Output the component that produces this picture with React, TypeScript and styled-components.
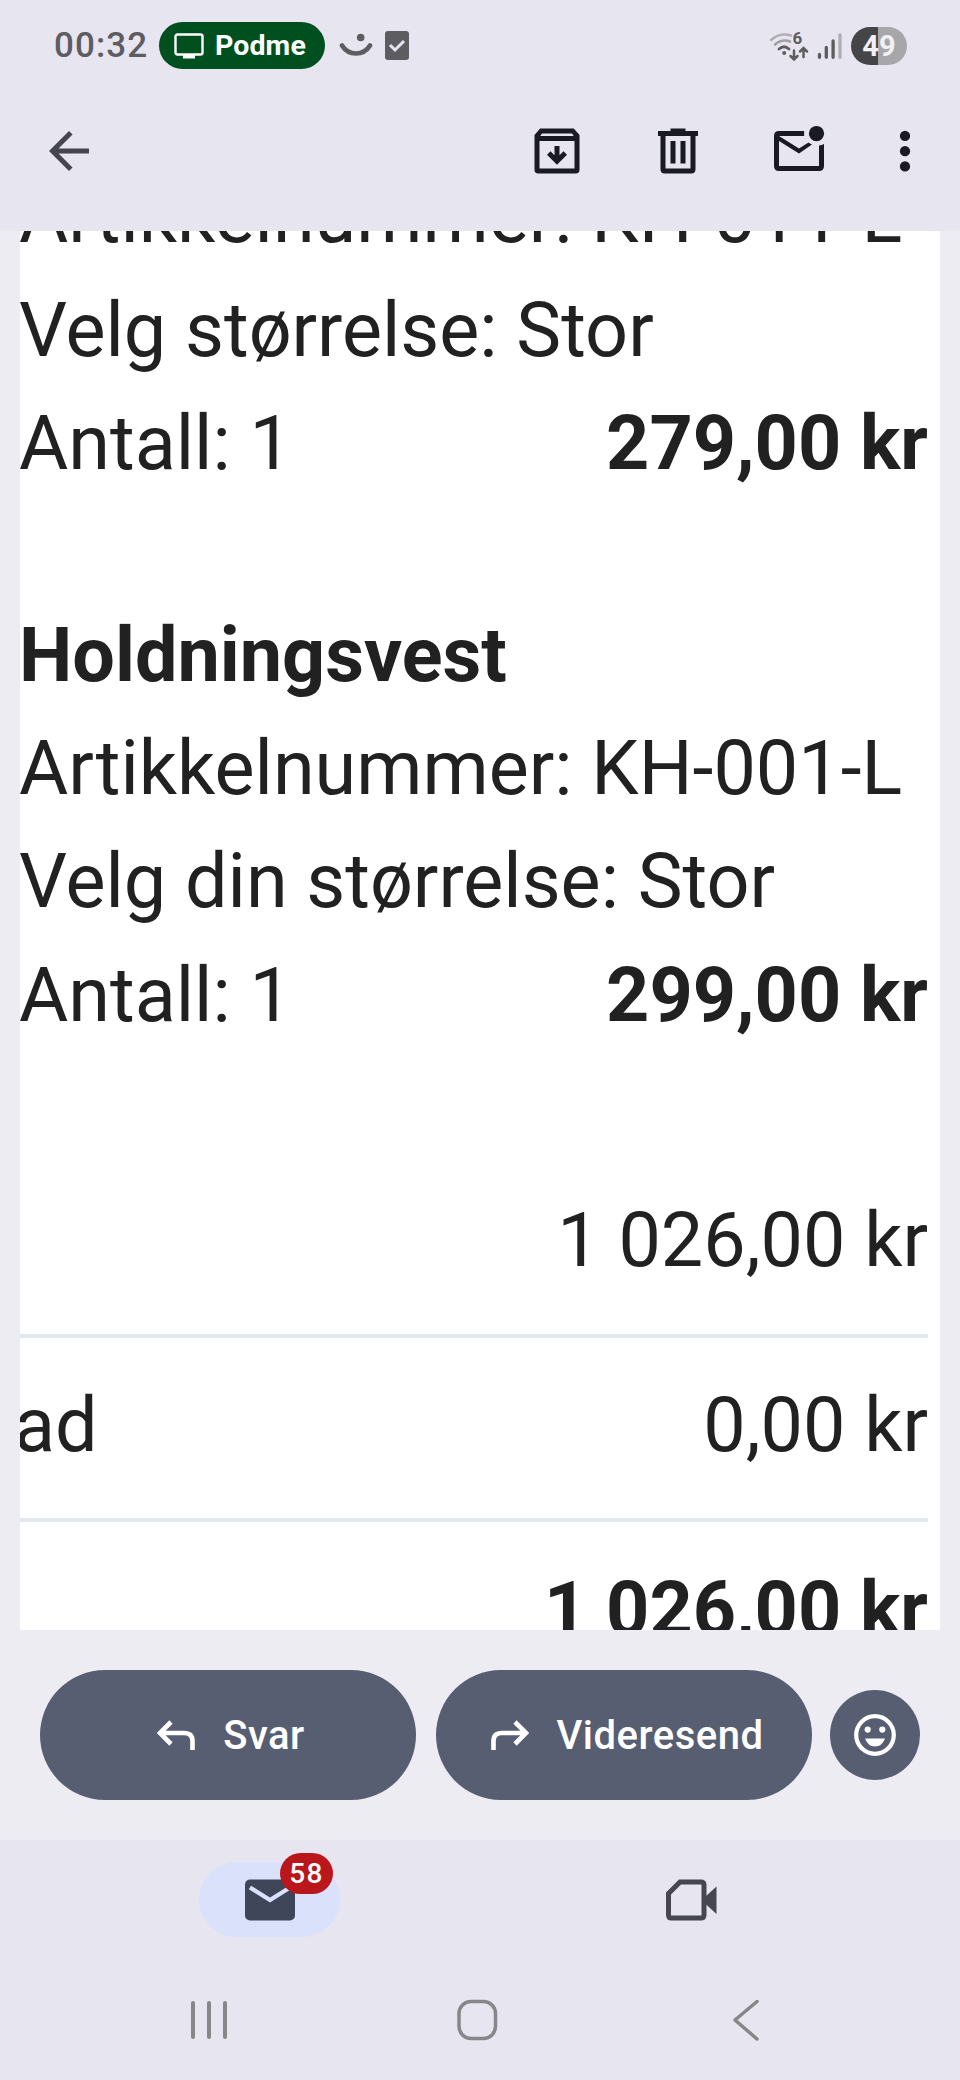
import React from "react";
import styled, { createGlobalStyle } from "styled-components";

const Global = createGlobalStyle`
  * { box-sizing: border-box; }
  html, body { margin: 0; padding: 0; }
  body { background: #edecf2; font-family: Roboto, "Liberation Sans", sans-serif; }
`;

const Screen = styled.div`
  display: flex;
  flex-direction: column;
  width: 960px;
  height: 2080px;
  overflow: hidden;
  background: #edecf2;
`;

const Header = styled.header`
  flex: none;
  height: 231px;
  background: #e7e5ef;
`;

const StatusBar = styled.div`
  display: flex;
  align-items: center;
  height: 91px;
  padding: 0 53px 0 54px;
`;

const Clock = styled.span`
  width: 105px;
  color: #5d5c61;
  font-size: 35px;
  font-weight: 500;
  letter-spacing: 1.1px;
  white-space: nowrap;
`;

const CastPill = styled.div`
  display: flex;
  align-items: center;
  gap: 11px;
  width: 166px;
  height: 47px;
  padding-left: 15px;
  border-radius: 24px;
  background: #00501f;
  color: #fff;
  font-size: 28.5px;
  font-weight: 700;
  letter-spacing: 0.1px;
`;

const Notices = styled.div`
  display: flex;
  align-items: center;
  gap: 12px;
  margin-left: 14px;
`;

const Indicators = styled.div`
  display: flex;
  align-items: center;
  gap: 8px;
  margin-left: auto;
`;

const Battery = styled.div`
  display: flex;
  align-items: center;
  justify-content: center;
  width: 56px;
  height: 38px;
  border-radius: 19px;
  background: linear-gradient(90deg, #454547 49%, #a7a6aa 49%);
  color: #f1f0f6;
  font-size: 29px;
  font-weight: 700;
`;

const Toolbar = styled.div`
  display: flex;
  align-items: center;
  height: 119px;
  padding: 0 25px 0 39px;
`;

const Actions = styled.div`
  display: flex;
  align-items: center;
  gap: 61px;
  margin-left: auto;
`;

const IconButton = styled.button<{ $pull?: number }>`
  display: flex;
  width: 60px;
  height: 60px;
  margin: 0 0 0 ${(p) => -(p.$pull ?? 0)}px;
  padding: 0;
  border: 0;
  background: none;
`;

const Message = styled.main`
  flex: none;
  display: flex;
  flex-direction: column;
  justify-content: flex-end;
  width: 920px;
  height: 1399px;
  margin-left: 20px;
  padding-right: 12px;
  overflow: hidden;
  background: #fff;
  color: #212121;
  font-size: 75.5px;
  line-height: 113.2px;
  white-space: nowrap;
`;

const Scrolled = styled.div`
  flex: none;
  margin-bottom: -37.2px;
`;

const Item = styled.section`
  margin: 0 0 99px -1px;
`;

const Line = styled.div`
  display: flex;
  justify-content: space-between;
  height: 113.2px;
`;

const Strong = styled.span`
  font-weight: 700;
`;

const TotalRow = styled.div<{ $first?: boolean; $last?: boolean; $bold?: boolean }>`
  display: flex;
  justify-content: flex-end;
  height: ${(p) => (p.$first ? 187 : p.$last ? 145 : 184.5)}px;
  padding-top: ${(p) => (p.$first ? 33.8 : 31.2)}px;
  border-bottom: ${(p) => (p.$last ? 0 : 4)}px solid #e2e8f0;
  font-weight: ${(p) => (p.$bold ? 700 : 400)};
`;

const RowLabel = styled.span`
  margin: 0 auto 0 -6px;
`;

const ReplyBar = styled.div`
  flex: none;
  display: flex;
  align-items: center;
  gap: 20px;
  height: 210px;
  padding: 0 40px;
`;

const ReplyButton = styled.button`
  display: flex;
  align-items: center;
  justify-content: center;
  gap: 28px;
  width: 376px;
  height: 130px;
  padding: 0 0 0 6px;
  border: 0;
  border-radius: 65px;
  background: #585e71;
  color: #fff;
  font: 500 40px Roboto, "Liberation Sans", sans-serif;
  letter-spacing: 0.5px;
`;

const EmojiButton = styled.button`
  display: flex;
  align-items: center;
  justify-content: center;
  width: 90px;
  height: 90px;
  margin-left: -2px;
  padding: 0;
  border: 0;
  border-radius: 50%;
  background: #585e71;
`;

const Footer = styled.footer`
  flex: none;
  height: 240px;
  background: #e7e5ef;
`;

const Tabs = styled.nav`
  display: flex;
  align-items: center;
  height: 119px;
  padding-left: 199px;
`;

const Tab = styled.div<{ $active?: boolean; $left?: number }>`
  position: relative;
  display: flex;
  align-items: center;
  justify-content: center;
  width: 141px;
  height: 75px;
  margin-left: ${(p) => p.$left ?? 0}px;
  border-radius: 38px;
  background: ${(p) => (p.$active ? "#dae1fb" : "transparent")};
`;

const Badge = styled.span`
  position: absolute;
  left: 81px;
  top: -9px;
  display: flex;
  align-items: center;
  justify-content: center;
  width: 53px;
  height: 41px;
  border-radius: 21px;
  background: #b9171b;
  color: #fff;
  font-size: 28px;
  font-weight: 500;
  letter-spacing: 1.3px;
`;

const SystemNav = styled.div`
  display: flex;
  align-items: center;
  height: 122px;
  padding-left: 187px;
`;

const NavKey = styled.div<{ $left?: number }>`
  display: flex;
  width: 44px;
  height: 44px;
  margin-left: ${(p) => p.$left ?? 0}px;
`;

const Glyph = ({ children, size = 60 }: { children: React.ReactNode; size?: number }) => (
  <svg width={size} height={size} viewBox="0 0 24 24" fill="#191a23">{children}</svg>
);

export default function App() {
  return (
    <>
      <Global />
      <Screen>
        <Header>
          <StatusBar>
            <Clock>00:32</Clock>
            <CastPill>
              <svg width="30" height="26" viewBox="0 0 30 26">
                <rect x="1.5" y="1.5" width="27" height="20" rx="2" fill="none" stroke="#fff" strokeWidth="2.4" />
                <rect x="9" y="21" width="12" height="4.5" fill="#fff" />
              </svg>
              Podme
            </CastPill>
            <Notices>
              <svg width="34" height="30" viewBox="0 0 34 30">
                <path d="M3 14.5 Q8 22.5 17 22.5 Q26 22.5 31 14.5" fill="none" stroke="#5d5c61" strokeWidth="4.6" strokeLinecap="round" />
                <circle cx="21.7" cy="6.5" r="3.8" fill="#5d5c61" />
              </svg>
              <svg width="24" height="29" viewBox="0 0 24 29">
                <rect width="24" height="29" rx="3" fill="#5d5c61" />
                <path d="M5 14 L10 19 L19 10" fill="none" stroke="#e7e5ef" strokeWidth="3" />
              </svg>
            </Notices>
            <Indicators>
              <svg width="40" height="34" viewBox="0 0 40 34" fill="none" strokeLinecap="round">
                <path d="M2 11 Q11 3 22 6.5" stroke="#b0aeb5" strokeWidth="2.5" />
                <path d="M6 15.5 Q13 9.5 21 12.5" stroke="#a09fa5" strokeWidth="2.6" />
                <path d="M10 20 Q15 15.5 20 20" stroke="#5d5c61" strokeWidth="2.8" />
                <circle cx="15.2" cy="24" r="2" fill="#5d5c61" />
                <path d="M25 21.5 V30 M21.5 27 L25 30.5 L28.5 27 M34.5 28 V19.5 M31 22.5 L34.5 19 L38 22.5" stroke="#5d5c61" strokeWidth="2.5" />
                <text x="23.6" y="15.4" fill="#5d5c61" fontFamily="Roboto" fontWeight="700" fontSize="17">6</text>
              </svg>
              <svg width="26" height="28" viewBox="0 0 26 28" fill="none" strokeWidth="3.3" strokeLinecap="round">
                <path d="M2.5 22.5 V25.3 M9.3 15.5 V25.3 M16.1 9 V25.3" stroke="#5d5c61" />
                <path d="M23 3 V25.3" stroke="#b0aeb5" />
              </svg>
              <Battery>49</Battery>
            </Indicators>
          </StatusBar>
          <Toolbar>
            <IconButton aria-label="Tilbake">
              <svg width="60" height="60" viewBox="0 0 24 24">
                <path d="M20 11H7.83l5.59-5.59L12 4l-8 8 8 8 1.41-1.41L7.83 13H20z" fill="#44454f" />
              </svg>
            </IconButton>
            <Actions>
              <IconButton aria-label="Arkiver">
                <Glyph>
                  <path fillRule="evenodd" d="M5.25 3H18.7L21 5.6V19.5Q21 21 19.5 21H4.5Q3 21 3 19.5V5.6ZM6 5L5.3 6H18.7L18 5ZM5 8V19H19V8Z" />
                  <path d="M11 10h2v3.7l1.6-1.6L16 13.5l-4 4-4-4 1.4-1.4 1.6 1.6z" />
                </Glyph>
              </IconButton>
              <IconButton aria-label="Slett">
                <Glyph>
                  <path fillRule="evenodd" d="M9 3H15V4H20V6H19V19.3Q19 21 17.3 21H6.7Q5 21 5 19.3V6H4V4H9ZM7 6V19H17V6Z" />
                  <path d="M9 8h2v9H9zM13 8h2v9h-2z" />
                </Glyph>
              </IconButton>
              <IconButton aria-label="Merk som ulest">
                <Glyph>
                  <path d="M22 9.18V18q0 2-2 2H4q-2 0-2-2V6q0-2 2-2h10.05v2H4l8 5 3.8-2.4q.5.4 1.4.8L12 13 4 8v10h16V9.75q1.1-.1 2-.57z" />
                  <circle cx="19" cy="5" r="3.05" />
                </Glyph>
              </IconButton>
              <IconButton $pull={15} aria-label="Mer">
                <Glyph>
                  <circle cx="12" cy="5.95" r="2.05" />
                  <circle cx="12" cy="12.05" r="2.05" />
                  <circle cx="12" cy="18.15" r="2.05" />
                </Glyph>
              </IconButton>
            </Actions>
          </Toolbar>
        </Header>

        <Message>
          <Scrolled>
            <Item>
              <Line>Artikkelnummer: KH-011-L</Line>
              <Line>Velg størrelse: Stor</Line>
              <Line>Antall: 1<Strong>279,00 kr</Strong></Line>
            </Item>
            <Item>
              <Line><Strong>Holdningsvest</Strong></Line>
              <Line>Artikkelnummer: KH-001-L</Line>
              <Line>Velg din størrelse: Stor</Line>
              <Line>Antall: 1<Strong>299,00 kr</Strong></Line>
            </Item>
            <TotalRow $first>1 026,00 kr</TotalRow>
            <TotalRow><RowLabel>ad</RowLabel>0,00 kr</TotalRow>
            <TotalRow $last $bold>1 026,00 kr</TotalRow>
          </Scrolled>
        </Message>

        <ReplyBar>
          <ReplyButton>
            <svg width="38" height="30" viewBox="0 0 38 30" fill="none" stroke="#fff" strokeWidth="4.6">
              <path d="M14 2 L3 13 L14 24 M3 13 H27 Q35.5 13 35.5 21 V30" />
            </svg>
            Svar
          </ReplyButton>
          <ReplyButton>
            <svg width="38" height="30" viewBox="0 0 38 30" fill="none" stroke="#fff" strokeWidth="4.6">
              <path d="M24 2 L35 13 L24 24 M35 13 H11 Q2.5 13 2.5 21 V30" />
            </svg>
            Videresend
          </ReplyButton>
          <EmojiButton aria-label="Reaksjon">
            <svg width="50" height="50" viewBox="0 0 50 50" fill="#fff">
              <circle cx="25" cy="25" r="18.8" fill="none" stroke="#fff" strokeWidth="4.2" />
              <circle cx="17.7" cy="19.6" r="3.1" />
              <circle cx="32.3" cy="19.6" r="3.1" />
              <path d="M15 28.5 H35 Q32 36.5 25 36.5 Q18 36.5 15 28.5Z" />
            </svg>
          </EmojiButton>
        </ReplyBar>

        <Footer>
          <Tabs>
            <Tab $active>
              <svg width="52" height="42" viewBox="0 0 52 42">
                <rect x="1" y="0.5" width="50" height="41" rx="5" fill="#404659" />
                <path d="M6 8.5 L26 21 L46 8.5" fill="none" stroke="#dae1fb" strokeWidth="4.4" />
              </svg>
              <Badge>58</Badge>
            </Tab>
            <Tab $left={280}>
              <svg width="52" height="42" viewBox="0 0 52 42">
                <path d="M15 3 H36 Q39 3 39 6 V36 Q39 39 36 39 H6.5 Q3.5 39 3.5 36 V14.5 Z" fill="none" stroke="#45464f" strokeWidth="5" />
                <path d="M40 18 L51.5 7.5 V35 L40 24.5Z" fill="#45464f" />
              </svg>
            </Tab>
          </Tabs>
          <SystemNav>
            <NavKey>
              <svg width="44" height="44" viewBox="0 0 44 44" stroke="#87868b" strokeWidth="4" strokeLinecap="round">
                <path d="M6 5V39M22 5V39M38 5V39" />
              </svg>
            </NavKey>
            <NavKey $left={224}>
              <svg width="44" height="44" viewBox="0 0 44 44">
                <rect x="4" y="3.5" width="36.5" height="37" rx="12" fill="none" stroke="#87868b" strokeWidth="3.5" />
              </svg>
            </NavKey>
            <NavKey $left={225}>
              <svg width="44" height="44" viewBox="0 0 44 44">
                <path d="M33 3.5 L11 22 L33 41" fill="none" stroke="#87868b" strokeWidth="3.5" strokeLinecap="round" strokeLinejoin="round" />
              </svg>
            </NavKey>
          </SystemNav>
        </Footer>
      </Screen>
    </>
  );
}
